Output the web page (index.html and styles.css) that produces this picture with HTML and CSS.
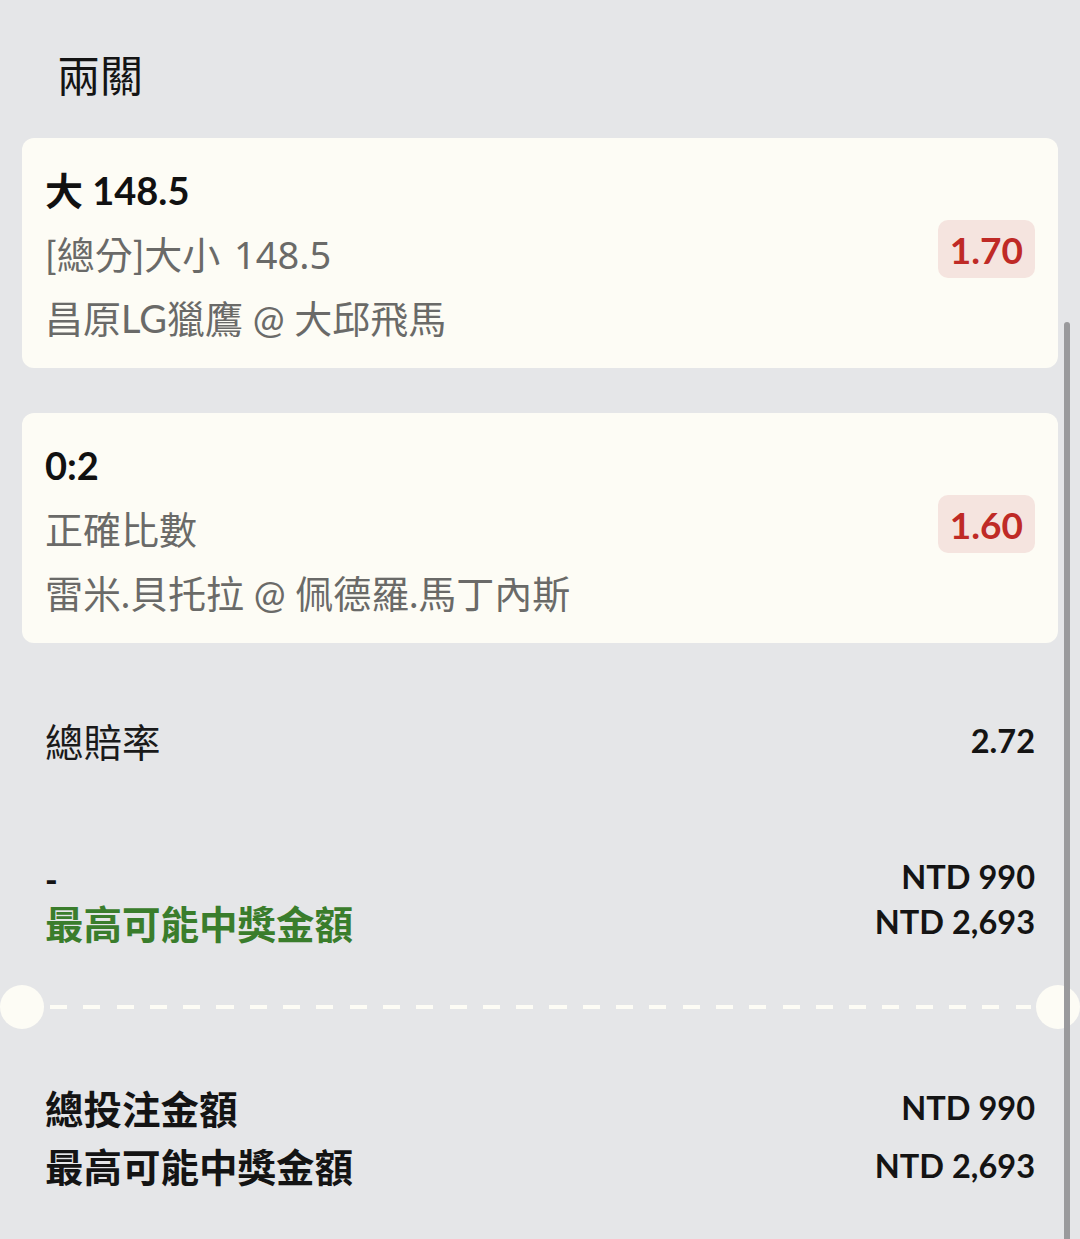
FILE: index.html
```html
<!DOCTYPE html>
<html lang="zh-Hant">
<head>
  <meta charset="UTF-8">
  <title>兩關</title>
  <link rel="stylesheet" href="styles.css">
</head>
<body>
  <div class="page">
    <h1 class="title">兩關</h1>

    <div class="card">
      <div class="card-info">
        <div class="pick">大 148.5</div>
        <div class="sub">[總分]大小 <span class="num">148.5</span></div>
        <div class="sub">昌原LG獵鷹 @ 大邱飛馬</div>
      </div>
      <div class="odds">1.70</div>
    </div>

    <div class="card">
      <div class="card-info">
        <div class="pick">0:2</div>
        <div class="sub">正確比數</div>
        <div class="sub">雷米.貝托拉 @ 佩德羅.馬丁內斯</div>
      </div>
      <div class="odds">1.60</div>
    </div>

    <div class="summary odds-summary">
      <div class="row total-odds">
        <span class="label">總賠率</span>
        <span class="value">2.72</span>
      </div>
    </div>

    <div class="summary payout">
      <div class="row">
        <span class="label dash">-</span>
        <span class="value">NTD 990</span>
      </div>
      <div class="row">
        <span class="label win">最高可能中獎金額</span>
        <span class="value">NTD 2,693</span>
      </div>
    </div>

    <div class="divider">
      <span class="notch"></span>
      <span class="dashes"></span>
      <span class="notch"></span>
    </div>

    <div class="summary totals">
      <div class="row">
        <span class="label strong">總投注金額</span>
        <span class="value">NTD 990</span>
      </div>
      <div class="row">
        <span class="label strong">最高可能中獎金額</span>
        <span class="value">NTD 2,693</span>
      </div>
    </div>

    <div class="scrollbar"></div>
  </div>
</body>
</html>
```

FILE: styles.css
```css
* {
  box-sizing: border-box;
}
body {
  margin: 0;
  background: #e5e6e8;
  font-family: Lato, "Noto Sans CJK TC", sans-serif;
  color: #141414;
}
.page {
  position: relative;
  width: 1080px;
  height: 1239px;
  overflow: hidden;
}
.title {
  margin: 0;
  padding: 44px 0 36px 57px;
  font-size: 43px;
  line-height: 58px;
  font-weight: 400;
  font-family: "Noto Sans CJK TC", sans-serif;
}
.card {
  display: flex;
  align-items: center;
  justify-content: space-between;
  margin: 0 22px 45px;
  padding: 20px 23px 18px;
  background: #fdfcf5;
  border-radius: 12px;
}
.card-info {
  display: flex;
  flex-direction: column;
}
.pick {
  font-size: 38px;
  line-height: 64px;
  font-weight: 700;
  color: #111;
}
.sub {
  font-size: 38px;
  line-height: 64px;
  color: #6a6a68;
}
.sub .num {
  font-family: "Noto Sans", sans-serif;
  margin-left: 4px;
}
.odds {
  height: 58px;
  padding: 0 12px;
  display: flex;
  align-items: center;
  background: #f5e4df;
  border-radius: 10px;
  color: #bf2a26;
  font-size: 37px;
  font-weight: 700;
  margin-top: -10px;
}
.summary {
  padding: 0 45px;
}
.row {
  display: flex;
  justify-content: space-between;
  align-items: center;
}
.odds-summary {
  margin-top: 68px;
}
.total-odds {
  height: 58px;
}
.total-odds .label {
  font-size: 38.5px;
  color: #1a1a1a;
}
.value {
  font-size: 32.5px;
  font-weight: 700;
  color: #141414;
}
.payout {
  margin-top: 85px;
}
.payout .row {
  height: 45px;
}
.dash {
  font-size: 34px;
  font-weight: 900;
  padding-top: 4px;
}
.win {
  font-size: 38.5px;
  font-weight: 700;
  color: #3a7d2c;
}
.divider {
  display: flex;
  align-items: center;
  margin-top: 41px;
  height: 44px;
}
.notch {
  width: 44px;
  height: 44px;
  border-radius: 50%;
  background: #fdfcf5;
  flex: none;
}
.dashes {
  flex: 1;
  height: 4px;
  margin: 0 5px 0 6px;
  background: repeating-linear-gradient(90deg, #fdfcf5 0 17px, transparent 17px 33.3px);
}
.totals {
  margin-top: 49px;
}
.totals .row {
  height: 58px;
}
.strong {
  font-size: 38.5px;
  font-weight: 700;
  color: #141414;
}
.scrollbar {
  position: absolute;
  left: 1064px;
  top: 322px;
  width: 6px;
  height: 940px;
  border-radius: 3px;
  background: #9a9a9c;
}
```
